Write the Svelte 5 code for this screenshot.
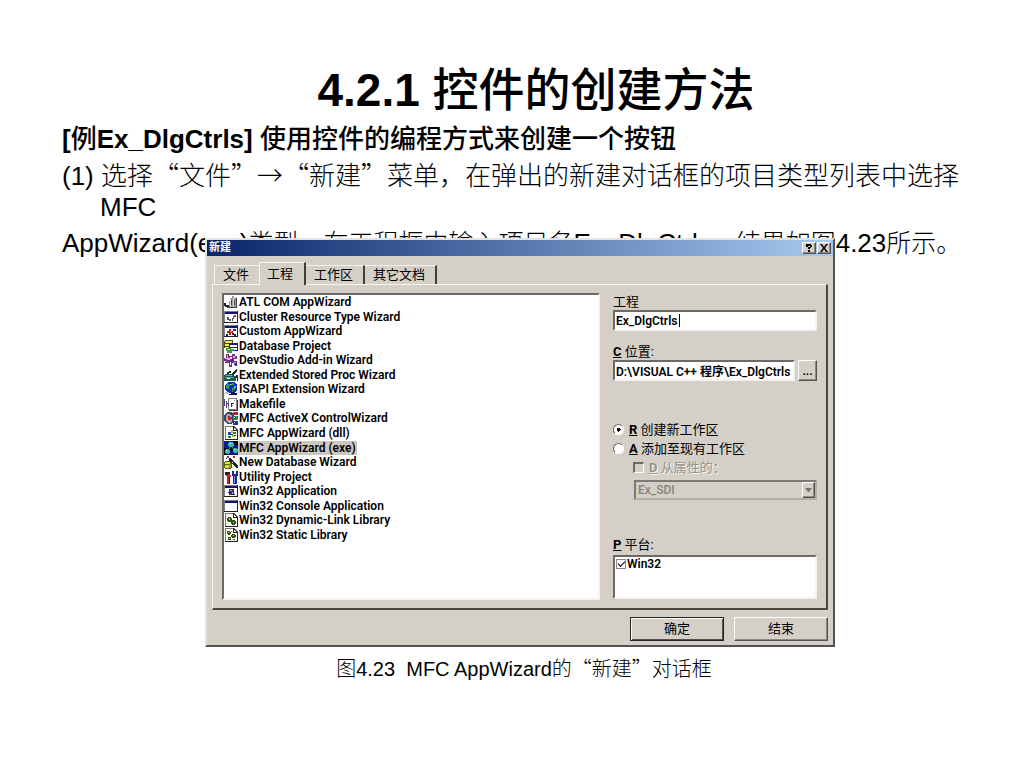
<script>
  const win = [
    ['#808080', 'M0 1h14v12H0z'],
    ['#fff', 'M1 4h12v8H1z'],
    ['#10107c', 'M1 2h12v2H1z'],
    ['#222', 'M13 1h1v12H0v-1h13z']
  ];
  const page = [
    ['#777', 'M1 0h9l4 4v10H1z'],
    ['#fffff0', 'M2 1h7v4h4v8H2z'],
    ['#222', 'M9 0l5 5H9zM13 5h1v9H1v-1h12z'],
    ['#fff', 'M10 2l2 2h-2z']
  ];

  const projects = [
    { name: 'ATL COM AppWizard', icon: [
      ['#9a9a9a', 'M6 3h2V1h2v2h2V2h1v11H5V6h1z'],
      ['#444', 'M12 3h1v10H3v-1h9zM7 5h1v5H7zM10 5h1v5h-1z'],
      ['#222', 'M0 8h2v2h3v2H1v-1H0z'],
      ['#e4e4e4', 'M6 4h1v7H6zM9 3h1v8H9z']
    ] },
    { name: 'Cluster Resource Type Wizard', icon: [...win,
      ['#555', 'M3 7h2v2h2v2H5v-1H3zM8 8h1V6h1v3H9v2H8z'],
      ['#b02040', 'M10 5h2v2h-2z']
    ] },
    { name: 'Custom AppWizard', icon: [...win,
      ['#c01818', 'M5 5h2v2h2v2H7v2H5V9H3V7h2z'],
      ['#222', 'M2 10h2v2H2zM8 9h2v1h2v2h-2v-1H8z'],
      ['#2828b0', 'M9 5h3v2H9z'],
      ['#e0c020', 'M6 7h2v1H6z']
    ] },
    { name: 'Database Project', icon: [
      ['#504800', 'M1 1h7l1 1v7H0V2z'],
      ['#f0e850', 'M1 2h7v2H1zM1 5h7v2H1zM1 8h7v1H1z'],
      ['#1a1a90', 'M5 4h9v8H5z'],
      ['#fff', 'M6 6h7v2H6zM6 9h7v2H6z'],
      ['#3fa030', 'M2 9h5v1h3v2H8v2H3v-2H2z'],
      ['#9de070', 'M3 10h3v1H3z']
    ] },
    { name: 'DevStudio Add-in Wizard', icon: [
      ['#7b2a85', 'M2 1h3v2h3V1h3v2h2v3h-3v2h3v4h-3v-2H8v4H5v-4H2V8H0V5h2z'],
      ['#f0a8c8', 'M3 2h1v3h2v2H3V6H1V5h2zM9 3h2v2H9zM10 9h2v1h-2z'],
      ['#fff', 'M6 4h2v2H6zM6 9h1v3H6z'],
      ['#2030b0', 'M7 6h2v2H7zM11 10h2v3h-2zM1 9h2v1H1z']
    ] },
    { name: 'Extended Stored Proc Wizard', icon: [
      ['#1c5a50', 'M1 6h9v2h2v5H0V7z'],
      ['#65b09a', 'M2 7h6v1H2zM1 9h8v1H1z'],
      ['#fff', 'M3 10h3v1H3zM8 3h1v1H8z'],
      ['#222', 'M3 4h2V3h2v2H5v1H3zM8 6l4-5h1v2l-3 4zM12 7h2v6h-1z']
    ] },
    { name: 'ISAPI Extension Wizard', icon: [
      ['#1728b0', 'M4 0h6l3 3v5l-3 3H4L1 8V3z'],
      ['#28a050', 'M3 2h3v2H5v3H3V6H2V3zM8 6h3v2H9v2H8zM8 1h2v2H8z'],
      ['#59c8e0', 'M6 2h2v1H6zM10 4h2v2h-2z'],
      ['#10105c', 'M7 10h3v1h3v2H5v-1h2z'],
      ['#c0c0d8', 'M1 10h4v2H1z']
    ] },
    { name: 'Makefile', icon: [
      ['#808080', 'M4 1h9v12H4z'],
      ['#fff', 'M5 2h7v10H5z'],
      ['#333', 'M13 3h1v11H5v-1h8zM7 6h3v1H8v3H7z'],
      ['#404070', 'M0 2h1v7H0zM2 4h1v2h2v3H4V7H3v4H2z'],
      ['#8888b8', 'M8 8h1v1H8zM10 3h1v1h-1z']
    ] },
    { name: 'MFC ActiveX ControlWizard', icon: [
      ['#404058', 'M3 1h4l3 3v6l-3 3H3L0 10V4z'],
      ['#a8a8b8', 'M3 3h3v1h2v2H6V5H4v4h2V8h2v2l-2 2H4L2 9V5z'],
      ['#c22030', 'M9 1h5v3H9zM4 6h3v3H4z'],
      ['#208848', 'M9 5h5v4H9z'],
      ['#2030b0', 'M9 10h5v4H9z'],
      ['#fff', 'M10 6h1v1h-1zM10 11h1v1h-1z']
    ] },
    { name: 'MFC AppWizard (dll)', icon: [...page,
      ['#2848b8', 'M4 6h3v3H4z'],
      ['#d8b020', 'M7 4h2v3H7zM8 9h2v2H8z'],
      ['#258050', 'M4 10h3v2H4zM9 6h3v2H9z'],
      ['#222', 'M7 8h2v1H7zM10 9h2v1h-2z']
    ] },
    { name: 'MFC AppWizard (exe)', selected: true, icon: [
      ['#101a90', 'M0 0h14v14H0z'],
      ['#000', 'M0 7h4v7H0zM9 0h5v4H9zM6 7h3v3H6z'],
      ['#38b8b0', 'M5 1h4v1h1v3H9v1H5V5H4V2h1zM2 8h3v1h1v3H5v1H2v-1H1V9h1zM10 7h3v1h1v3h-1v1h-3v-1H9V8h1z'],
      ['#c8fff0', 'M6 2h1v1H6zM2 9h1v1H2zM10 8h1v1h-1z'],
      ['#208040', 'M5 6h1v2H5zM8 6h1v2H8z']
    ] },
    { name: 'New Database Wizard', icon: [
      ['#606000', 'M1 6h6v1h1v6H7v1H1v-1H0V7h1z'],
      ['#d8e040', 'M1 7h5v2H1zM1 10h5v3H1z'],
      ['#79a030', 'M5 9h2v4H5z'],
      ['#222', 'M5 3h2l7 8v2h-2L5 5zM2 3h1v1H2z'],
      ['#c02828', 'M3 1h2v2H3zM9 1h2v2H9z'],
      ['#ececec', 'M8 7h1v1H8z']
    ] },
    { name: 'Utility Project', icon: [
      ['#c02030', 'M3 3h3v2h1v2H6v7H3V6H2V4h1z'],
      ['#222', 'M1 2h5v2H4v1H1zM5 7h1v7H5z'],
      ['#202890', 'M8 1h2v3h2V1h2v4l-1 2v7H9V7L8 5z'],
      ['#8090e0', 'M10 6h1v7h-1z']
    ] },
    { name: 'Win32 Application', icon: [...win,
      ['#303078', 'M5 5h5v6H5z'],
      ['#a8a8e0', 'M6 6h2v1H6zM8 8h1v2H8z'],
      ['#222', 'M4 8h2v1H4zM9 10h2v1H9z']
    ] },
    { name: 'Win32 Console Application', icon: win },
    { name: 'Win32 Dynamic-Link Library', icon: [...page,
      ['#31501c', 'M4 4h3v1h1v3H7v1H4V8H3V5h1zM8 7h3v1h1v3h-1v1H8v-1H7V8h1z'],
      ['#d6dc58', 'M5 5h1v2H5zM9 9h1v1H9z']
    ] },
    { name: 'Win32 Static Library', icon: [...page,
      ['#31501c', 'M3 3h3v1h1v2H6v1H4V6H3zM8 6h3v1h1v2h-1v1H8V9H7V7h1zM4 9h3v3H4z'],
      ['#d6dc58', 'M4 4h1v1H4zM9 7h1v1H9zM5 10h1v1H5z'],
      ['#555', 'M9 11h2v1H9zM7 3h1v1H7z']
    ] }
  ];

  const tabs = ['文件', '工程', '工作区', '其它文档'];
  let activeTab = $state('工程');
  let projectName = $state('Ex_DlgCtrls');
  let location = $state('D:\\VISUAL C++ 程序\\Ex_DlgCtrls');
  let workspace = $state('new');
  let win32 = $state(true);
</script>

<main lang="zh-CN">
  <h1>4.2.1 <span class="zh">控件的创建方法</span></h1>
  <h2>[<span class="zh">例</span>Ex_DlgCtrls] <span class="zh">使用控件的编程方式来创建一个按钮</span></h2>
  <p class="step">(1) <span class="zh">选择“文件”→“新建”菜单，在弹出的新建对话框的项目类型列表中选择</span> MFC</p>
  <p class="result">AppWizard(exe)<span class="zh">类型，在工程框中输入项目名</span>Ex_DlgCtrls<span class="zh">，结果如图</span>4.23<span class="zh">所示。</span></p>

  <figure>
    <section class="dialog" aria-label="新建">
      <header>
        <strong>新建</strong>
        <button class="cap" aria-label="帮助">
          <svg viewBox="0 0 10 8" width="10" height="8"><path d="M2 0h5v1h1v2H7v1H6v1H4V3h2V2H4v1H2zM4 6h2v2H4z" /></svg>
        </button>
        <button class="cap" aria-label="关闭">
          <svg viewBox="0 0 10 8" width="10" height="8"><path d="M1 0h2l2 3 2-3h2L6 4l3 4H7L5 5 3 8H1l3-4z" /></svg>
        </button>
      </header>

      <div class="tabs" role="tablist">
        {#each tabs as tab}
          <button role="tab" aria-selected={tab === activeTab} class:active={tab === activeTab} onclick={() => (activeTab = tab)}>{tab}</button>
        {/each}
      </div>

      <div class="panel">
        <ul class="list sunken">
          {#each projects as project}
            <li class:selected={project.selected}>
              <svg viewBox="0 0 14 14" width="14" height="14" shape-rendering="crispEdges">
                {#each project.icon as [fill, d]}<path {fill} {d} />{/each}
              </svg>
              <span>{project.name}</span>
            </li>
          {/each}
        </ul>

        <form class="fields" onsubmit={(e) => e.preventDefault()}>
          <label for="name">工程</label>
          <div class="field">
            <input id="name" class="text sunken" spellcheck="false" bind:value={projectName} />
            <i class="caret"></i>
          </div>

          <label for="location" class="gap-m"><u>C</u> 位置:</label>
          <div class="field browse">
            <input id="location" class="text sunken" spellcheck="false" bind:value={location} />
            <button class="raised" aria-label="浏览">...</button>
          </div>

          <label class="choice gap-l"><input type="radio" value="new" bind:group={workspace} /><span><u>R</u> 创建新工作区</span></label>
          <label class="choice"><input type="radio" value="add" bind:group={workspace} /><span><u>A</u> 添加至现有工作区</span></label>
          <label class="choice off"><input type="checkbox" disabled /><span><u>D</u> 从属性的：</span></label>
          <div class="combo sunken">
            <select disabled aria-label="从属性的"><option>Ex_SDI</option></select>
            <span class="drop raised"><svg viewBox="0 0 7 4" width="7" height="4"><path d="M0 0h7L4 4H3z" /></svg></span>
          </div>

          <span class="label gap-x"><u>P</u> 平台:</span>
          <div class="platforms sunken">
            <label><input type="checkbox" bind:checked={win32} />Win32</label>
          </div>
        </form>
      </div>

      <footer>
        <button class="raised default">确定</button>
        <button class="raised">结束</button>
      </footer>
    </section>
    <figcaption>图4.23&nbsp; MFC AppWizard<span class="zh">的“新建”对话框</span></figcaption>
  </figure>
</main>

<style>
  :global(body) {
    margin: 0;
    background: #fff;
  }
  * {
    box-sizing: border-box;
  }
  main {
    padding: 60px 46px 60px 62px;
    color: #000;
    font: 26px/31px 'Liberation Sans', 'Noto Sans CJK SC', sans-serif;
    font-weight: 300;
  }
  .zh {
    font-family: 'Noto Sans CJK SC', sans-serif;
    line-height: 16px;
  }
  h1 {
    margin: 0 0 4px;
    padding-left: 32px;
    font-size: 46px;
    line-height: 60px;
    font-weight: bold;
    text-align: center;
  }
  h2 {
    margin: 0 0 6px;
    font-size: 26px;
    line-height: 31px;
    font-weight: bold;
  }
  h1 .zh,
  h2 .zh {
    font-weight: 500;
  }
  p {
    margin: 0;
  }
  .step {
    margin-bottom: 5px;
    padding-left: 38px;
    text-indent: -38px;
  }
  .result {
    white-space: nowrap;
  }
  .result .zh {
    font-size: 25px;
  }
  figure {
    position: relative;
    margin: -21px 0 0;
  }
  figcaption {
    margin-top: 7px;
    padding-left: 8px;
    font-size: 20px;
    line-height: 30px;
    text-align: center;
  }

  .dialog {
    max-width: 630px;
    margin: 0 auto;
    border: 2px solid;
    border-color: #e4e2dc #55524e #55524e #e4e2dc;
    background: #d4d0c8;
    font: 12px/14px Roboto, 'Noto Sans CJK SC', sans-serif;
  }
  button,
  input,
  select {
    margin: 0;
    color: #000;
    font: inherit;
  }
  .sunken {
    border: 2px solid;
    border-color: #6c6a66 #f4f3f0 #f4f3f0 #6c6a66;
    background: #fff;
  }
  .raised,
  .cap {
    padding: 0;
    border: 1px solid;
    border-color: #fff #55524e #55524e #fff;
    background: #d4d0c8;
    box-shadow: inset -1px -1px #8c8982;
  }

  header {
    display: flex;
    align-items: center;
    height: 16px;
    padding: 0 2px;
    background: linear-gradient(90deg, #0a246a, #a6caf0);
  }
  header strong {
    flex: 1;
    color: #fff;
    font-size: 11px;
  }
  .cap {
    display: grid;
    place-items: center;
    width: 14px;
    height: 12px;
    margin-left: 1px;
  }

  .tabs {
    display: flex;
    align-items: flex-end;
    height: 22px;
    margin: 6px 5px 0 7px;
  }
  .tabs button {
    height: 19px;
    padding: 0 10px 0 8px;
    border: solid;
    border-width: 1px 2px 0 0;
    border-color: #f4f3f0 #403e3a;
    background: none;
    font-size: 13px;
    line-height: 16px;
  }
  .tabs button:first-child {
    border-left: 1px solid #f4f3f0;
    border-right: 0;
  }
  .tabs button.active {
    position: relative;
    height: 23px;
    margin-bottom: -1px;
    border-left: 1px solid #f4f3f0;
    padding: 0 11px 0 7px;
    background: #d4d0c8;
  }

  .panel {
    display: grid;
    grid-template-columns: 1fr 204px;
    gap: 13px;
    margin: 0 5px;
    padding: 8px 9px;
    border: solid;
    border-width: 1px 2px 2px 1px;
    border-color: #f4f3f0 #4a4844 #4a4844 #f4f3f0;
  }
  .list {
    display: grid;
    grid-template-rows: repeat(17, 1fr);
    height: 307px;
    margin: 0;
    padding: 0 0 56px;
    list-style: none;
    font-weight: 600;
  }
  .list li {
    display: flex;
    align-items: center;
    min-height: 0;
  }
  .list svg {
    flex: none;
  }
  .list span {
    padding: 0 1px;
  }
  .list .selected span {
    background: #ccc8c0;
  }

  .fields {
    display: flex;
    flex-direction: column;
    font-weight: 600;
  }
  .fields > label,
  .label {
    font-size: 13px;
    line-height: 17px;
    font-weight: 400;
  }
  u {
    font-weight: 700;
  }
  .field {
    position: relative;
    display: flex;
    gap: 3px;
  }
  .text {
    flex: 1;
    min-width: 0;
    height: 21px;
    padding: 0 1px;
    border-radius: 0;
    outline: 0;
  }
  .browse button {
    width: 19px;
  }
  .caret {
    position: absolute;
    top: 4px;
    left: 66px;
    width: 1px;
    height: 13px;
    background: #000;
  }
  .gap-m {
    margin-top: 12px;
  }
  .fields .gap-l {
    margin-top: 39px;
  }
  .gap-x {
    margin-top: 36px;
  }
  .choice {
    display: flex;
    align-items: center;
    gap: 5px;
    height: 19px;
  }
  .choice input {
    appearance: none;
    width: 11px;
    height: 11px;
    border: 1px solid;
    border-color: #6c6a66 #fff #fff #6c6a66;
    border-radius: 50%;
    background: #fff;
  }
  .choice input:checked {
    background: radial-gradient(circle, #000 2px, #fff 2px);
  }
  .choice.off {
    padding-left: 20px;
    color: #99958e;
    text-shadow: 1px 1px #f4f3f0;
  }
  .choice.off input {
    border-width: 2px 1px 1px 2px;
    border-radius: 0;
    background: #d4d0c8;
  }
  .combo {
    display: flex;
    height: 20px;
    margin: 3px 0 0 21px;
    border-color: #7c7a75 #b4b1aa #b4b1aa #7c7a75;
    background: #d4d0c8;
  }
  .combo select {
    appearance: none;
    flex: 1;
    padding: 0 2px;
    border: 0;
    background: none;
    color: #8c8982;
    opacity: 1;
  }
  .drop {
    display: grid;
    place-items: center;
    width: 13px;
    fill: #77746e;
  }
  .platforms {
    height: 44px;
    margin-top: 2px;
  }
  .platforms label {
    display: flex;
    align-items: center;
    gap: 1px;
    padding-left: 1px;
  }
  .platforms input {
    appearance: none;
    width: 10px;
    height: 10px;
    border: 1px solid #8c8982;
  }
  .platforms input:checked::before {
    content: '';
    display: block;
    width: 6px;
    height: 3px;
    margin: 1px;
    border: solid #000;
    border-width: 0 0 1px 1px;
    transform: rotate(-45deg);
  }

  footer {
    display: flex;
    justify-content: flex-end;
    gap: 10px;
    padding: 7px 5px 4px;
  }
  footer button {
    width: 94px;
    height: 24px;
    font-size: 13px;
  }
  footer .default {
    border-color: #222;
    box-shadow: inset 1px 1px #fff, inset -1px -1px #55524e;
  }
</style>
